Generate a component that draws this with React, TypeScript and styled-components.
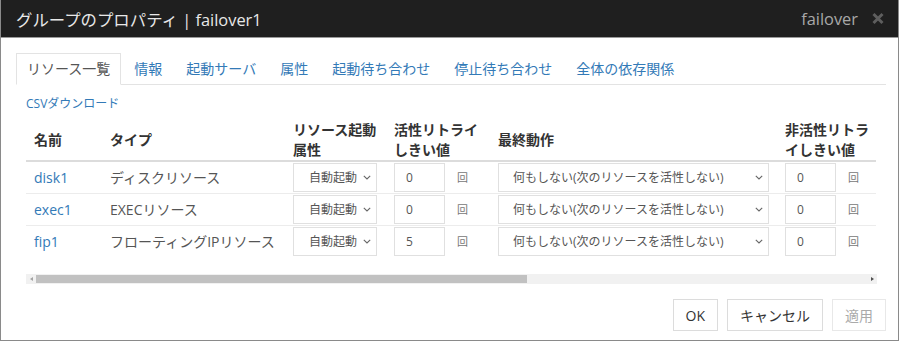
import React from 'react';
import styled, { createGlobalStyle } from 'styled-components';

const GlobalStyle = createGlobalStyle`
    html, body {
        margin: 0;
        padding: 0;
        background: #fff;
    }
    body {
        font-family: 'Open Sans', 'Noto Sans CJK JP', sans-serif;
        color: #333;
    }
`;

const Window = styled.div`
    width: 899px;
    height: 341px;
    box-sizing: border-box;
    border: 1px solid #8a8a8a;
    border-top: none;
    display: flex;
    flex-direction: column;
    background: #fff;
`;

const TitleBar = styled.div`
    height: 37px;
    flex: none;
    display: flex;
    align-items: center;
    justify-content: space-between;
    padding: 0 14px 0 15px;
    background: #1f1f1f;
    border-bottom: 1px solid #9a9a9a;
`;

const Title = styled.div`
    font-size: 16.4px;
    color: #e8e8e8;
    white-space: nowrap;
`;

const TitleRight = styled.div`
    display: flex;
    align-items: center;
    gap: 14px;
`;

const ServerName = styled.span`
    font-size: 16.4px;
    color: #a8a8a8;
`;

const CloseButton = styled.span`
    display: flex;
    width: 12px;
    height: 13px;
    cursor: pointer;
    svg {
        width: 12px;
        height: 13px;
    }
`;

const Body = styled.div`
    flex: 1;
    display: flex;
    flex-direction: column;
    padding: 15px 12px 9px 15px;
`;

const Tabs = styled.ul`
    display: flex;
    list-style: none;
    margin: 0;
    padding: 0;
    border-bottom: 1px solid #e3e3e3;
`;

const Tab = styled.li<{ $active?: boolean }>`
    margin: 0 2px -1px 0;
    padding: 5px 10px;
    line-height: 20px;
    font-size: 14px;
    white-space: nowrap;
    border: 1px solid ${(p) => (p.$active ? '#e3e3e3' : 'transparent')};
    border-bottom-color: ${(p) => (p.$active ? '#fff' : 'transparent')};
    background: ${(p) => (p.$active ? '#fff' : 'transparent')};
    color: ${(p) => (p.$active ? '#555' : '#337ab7')};
    cursor: pointer;
`;

const Pane = styled.div`
    padding: 0 9px 0 10px;
`;

const CsvLink = styled.a`
    display: block;
    margin-top: 10px;
    font-size: 12px;
    line-height: 17px;
    color: #337ab7;
    text-decoration: none;
`;

const TableScroll = styled.div`
    margin-top: 8px;
    width: 850px;
    overflow: hidden;
`;

const Table = styled.table`
    width: 850px;
    table-layout: fixed;
    border-collapse: collapse;
`;

const Th = styled.th`
    height: 40px;
    padding: 0 8px;
    font-size: 14px;
    font-weight: 700;
    line-height: 20px;
    text-align: left;
    vertical-align: middle;
    color: #333;
    white-space: nowrap;
    border-bottom: 2px solid #dcdcdc;
`;

const Td = styled.td`
    padding: 1px 8px;
    font-size: 14px;
    line-height: 20px;
    vertical-align: middle;
    white-space: nowrap;
    color: #555;
    border-top: 1px solid #ececec;
`;

const NameLink = styled.a`
    color: #337ab7;
    text-decoration: none;
`;

const SelectWrap = styled.div<{ $width: number }>`
    position: relative;
    width: ${(p) => p.$width}px;
    svg {
        position: absolute;
        right: 6px;
        top: 12px;
        width: 8px;
        height: 5px;
        pointer-events: none;
    }
`;

const Select = styled.select<{ $pad: number }>`
    appearance: none;
    width: 100%;
    height: 29px;
    box-sizing: border-box;
    padding: 0 18px 0 ${(p) => p.$pad}px;
    border: 1px solid #e0e0e0;
    border-radius: 0;
    background: #fff;
    font-family: 'Open Sans', 'Noto Sans CJK JP', sans-serif;
    font-size: 12px;
    color: #555;
    outline: none;
`;

const NumberCell = styled.div`
    display: flex;
    align-items: center;
`;

const NumberInput = styled.input`
    width: 51px;
    height: 29px;
    box-sizing: border-box;
    padding: 0 11px;
    border: 1px solid #e0e0e0;
    font-family: 'Open Sans', 'Noto Sans CJK JP', sans-serif;
    font-size: 12px;
    color: #555;
    outline: none;
`;

const Unit = styled.span`
    margin-left: 12px;
    font-size: 11px;
    color: #777;
`;

const ScrollBar = styled.div`
    margin-top: 17px;
    height: 10px;
    display: flex;
    align-items: center;
    background: #f1f1f1;
`;

const ScrollArrow = styled.div<{ $dir: 'left' | 'right' }>`
    width: 10px;
    height: 10px;
    display: flex;
    align-items: center;
    justify-content: center;
    &::before {
        content: '';
        width: 0;
        height: 0;
        border-top: 2px solid transparent;
        border-bottom: 2px solid transparent;
        ${(p) =>
            p.$dir === 'left'
                ? 'border-right: 3px solid #a3a3a3;'
                : 'border-left: 3px solid #505050;'}
    }
`;

const ScrollThumb = styled.div`
    width: 491px;
    height: 8px;
    background: #c1c1c1;
`;

const ScrollSpace = styled.div`
    flex: 1;
`;

const Footer = styled.div`
    margin-top: auto;
    display: flex;
    justify-content: flex-end;
    gap: 9px;
`;

const Button = styled.button`
    height: 32px;
    padding: 0 12px;
    border: 1px solid #dcdcdc;
    background: #fff;
    font-family: 'Open Sans', 'Noto Sans CJK JP', sans-serif;
    font-size: 14px;
    color: #333;
    cursor: pointer;
    &:disabled {
        color: #aaa;
        border-color: #e8e8e8;
        cursor: default;
    }
`;

const Chevron = () => (
    <svg viewBox="0 0 8 5" fill="none">
        <path d="M0.8 0.8 4 4 7.2 0.8" stroke="#666" strokeWidth="1.1" />
    </svg>
);

const tabs = ['リソース一覧', '情報', '起動サーバ', '属性', '起動待ち合わせ', '停止待ち合わせ', '全体の依存関係'];

const resources = [
    { name: 'disk1', type: 'ディスクリソース', retry: '0', deact: '0' },
    { name: 'exec1', type: 'EXECリソース', retry: '0', deact: '0' },
    { name: 'fip1', type: 'フローティングIPリソース', retry: '5', deact: '0' },
];

const App: React.FC = () => {
    return (
        <>
            <GlobalStyle />
            <Window>
                <TitleBar>
                    <Title>グループのプロパティ | failover1</Title>
                    <TitleRight>
                        <ServerName>failover</ServerName>
                        <CloseButton>
                            <svg viewBox="0 0 12 13" fill="none">
                                <path d="M1.5 2 10.5 11M10.5 2 1.5 11" stroke="#5e5e5e" strokeWidth="3" />
                            </svg>
                        </CloseButton>
                    </TitleRight>
                </TitleBar>

                <Body>
                    <Tabs>
                        {tabs.map((t, i) => (
                            <Tab key={t} $active={i === 0}>
                                {t}
                            </Tab>
                        ))}
                    </Tabs>

                    <Pane>
                        <CsvLink href="#">CSVダウンロード</CsvLink>

                        <TableScroll>
                            <Table>
                                <colgroup>
                                    <col style={{ width: 76 }} />
                                    <col style={{ width: 183 }} />
                                    <col style={{ width: 101 }} />
                                    <col style={{ width: 104 }} />
                                    <col style={{ width: 287 }} />
                                    <col style={{ width: 99 }} />
                                </colgroup>
                                <thead>
                                    <tr>
                                        <Th>名前</Th>
                                        <Th>タイプ</Th>
                                        <Th>
                                            リソース起動
                                            <br />
                                            属性
                                        </Th>
                                        <Th>
                                            活性リトライ
                                            <br />
                                            しきい値
                                        </Th>
                                        <Th>最終動作</Th>
                                        <Th>
                                            非活性リトラ
                                            <br />
                                            イしきい値
                                        </Th>
                                    </tr>
                                </thead>
                                <tbody>
                                    {resources.map((r) => (
                                        <tr key={r.name}>
                                            <Td>
                                                <NameLink href="#">{r.name}</NameLink>
                                            </Td>
                                            <Td>{r.type}</Td>
                                            <Td>
                                                <SelectWrap $width={84}>
                                                    <Select $pad={15} defaultValue="auto">
                                                        <option value="auto">自動起動</option>
                                                        <option value="manual">手動起動</option>
                                                    </Select>
                                                    <Chevron />
                                                </SelectWrap>
                                            </Td>
                                            <Td>
                                                <NumberCell>
                                                    <NumberInput readOnly value={r.retry} />
                                                    <Unit>回</Unit>
                                                </NumberCell>
                                            </Td>
                                            <Td>
                                                <SelectWrap $width={271}>
                                                    <Select $pad={14} defaultValue="none">
                                                        <option value="none">何もしない(次のリソースを活性しない)</option>
                                                    </Select>
                                                    <Chevron />
                                                </SelectWrap>
                                            </Td>
                                            <Td>
                                                <NumberCell>
                                                    <NumberInput readOnly value={r.deact} />
                                                    <Unit>回</Unit>
                                                </NumberCell>
                                            </Td>
                                        </tr>
                                    ))}
                                </tbody>
                            </Table>
                        </TableScroll>

                        <ScrollBar>
                            <ScrollArrow $dir="left" />
                            <ScrollThumb />
                            <ScrollSpace />
                            <ScrollArrow $dir="right" />
                        </ScrollBar>
                    </Pane>

                    <Footer>
                        <Button>OK</Button>
                        <Button>キャンセル</Button>
                        <Button disabled>適用</Button>
                    </Footer>
                </Body>
            </Window>
        </>
    );
};

export default App;
